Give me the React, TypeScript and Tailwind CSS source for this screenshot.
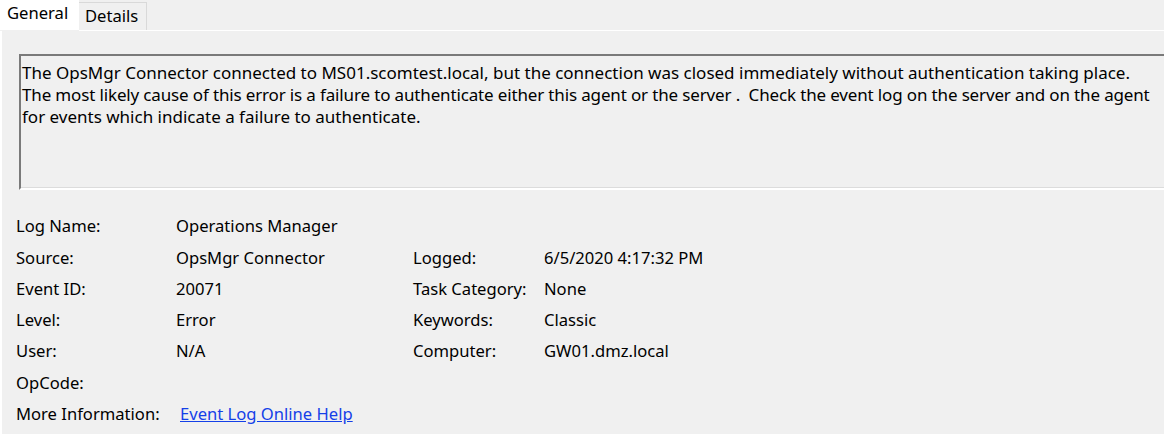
import React from "react";

const leftRows = [
  { label: "Log Name:", value: "Operations Manager" },
  { label: "Source:", value: "OpsMgr Connector" },
  { label: "Event ID:", value: "20071" },
  { label: "Level:", value: "Error" },
  { label: "User:", value: "N/A" },
  { label: "OpCode:", value: "" },
];

const rightRows = [
  { label: "", value: "" },
  { label: "Logged:", value: "6/5/2020 4:17:32 PM" },
  { label: "Task Category:", value: "None" },
  { label: "Keywords:", value: "Classic" },
  { label: "Computer:", value: "GW01.dmz.local" },
];

const Row = ({ label, value, labelWidth }: { label: string; value: string; labelWidth: string }) => (
  <div className="flex h-[31.3px] items-center">
    <span className={labelWidth}>{label}</span>
    <span>{value}</span>
  </div>
);

const App = () => {
  return (
    <div
      className="w-[1164px] h-[434px] overflow-hidden bg-[#f0f0f0] text-[16.6px] text-black"
      style={{ fontFamily: '"Noto Sans", "Open Sans", sans-serif' }}
    >
      {/* tab strip */}
      <div className="flex h-[30px] items-end">
        <div className="h-[30px] w-[79px] bg-white pl-[7px] pt-[2px] leading-[22px]">General</div>
        <div className="h-[28px] w-[68px] border border-b-0 border-l-0 border-[#d9d9d9] pl-[6px] pt-[2px] leading-[22px]">
          Details
        </div>
      </div>
      <div className="h-[1px] ml-[79px] bg-white" />

      <div className="h-[403px] border-l-2 border-white pl-[17px] pt-[23px]">
        {/* description box */}
        <div className="h-[136px] w-[1200px] border-t-2 border-l-2 border-t-[#7a7a7a] border-l-[#7a7a7a] border-b-2 border-b-white">
          <div className="h-full border-b border-[#dcdcdc] pl-[1px] pt-[6px] text-[17px] leading-[22px] whitespace-pre">
            <div>The OpsMgr Connector connected to MS01.scomtest.local, but the connection was closed immediately without authentication taking place.</div>
            <div className="tracking-[-0.15px]">The most likely cause of this error is a failure to authenticate either this agent or the server .  Check the event log on the server and on the agent</div>
            <div>for events which indicate a failure to authenticate.</div>
          </div>
        </div>

        {/* properties */}
        <div className="mt-[21px] ml-[-3px] flex">
          <div className="w-[397px]">
            {leftRows.map((r) => (
              <Row key={r.label} label={r.label} value={r.value} labelWidth="w-[160px]" />
            ))}
            <div className="flex h-[31.3px] items-center">
              <span className="w-[164px]">More Information:</span>
              <a href="#" className="text-[#1440e8] underline">
                Event Log Online Help
              </a>
            </div>
          </div>
          <div>
            {rightRows.map((r, i) => (
              <Row key={i} label={r.label} value={r.value} labelWidth="w-[131px]" />
            ))}
          </div>
        </div>
      </div>
    </div>
  );
};

export default App;
